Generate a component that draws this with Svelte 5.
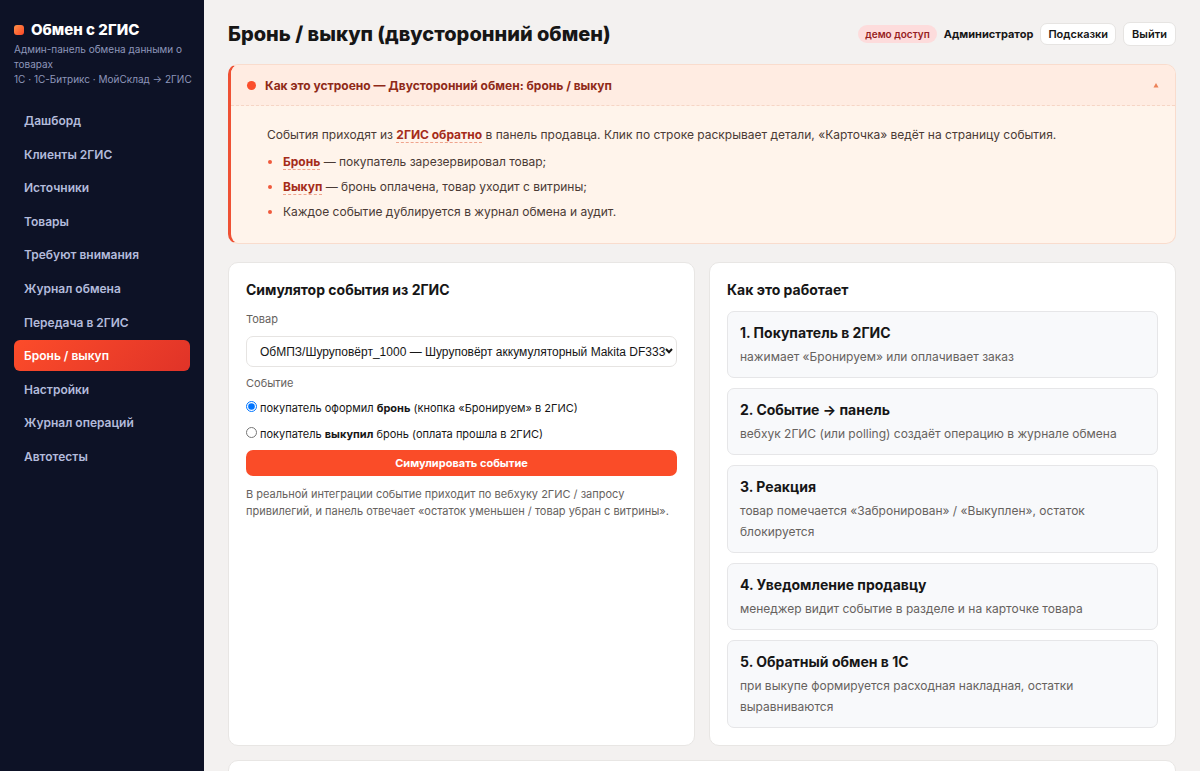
<script lang="ts">
  const nav = [
    'Дашборд',
    'Клиенты 2ГИС',
    'Источники',
    'Товары',
    'Требуют внимания',
    'Журнал обмена',
    'Передача в 2ГИС',
    'Бронь / выкуп',
    'Настройки',
    'Журнал операций',
    'Автотесты',
  ];

  const steps = [
    { title: 'Покупатель в 2ГИС', text: 'нажимает «Бронируем» или оплачивает заказ' },
    { title: 'Событие → панель', text: 'вебхук 2ГИС (или polling) создаёт операцию в журнале обмена' },
    { title: 'Реакция', text: 'товар помечается «Забронирован» / «Выкуплен», остаток блокируется' },
    { title: 'Уведомление продавцу', text: 'менеджер видит событие в разделе и на карточке товара' },
    { title: 'Обратный обмен в 1С', text: 'при выкупе формируется расходная накладная, остатки выравниваются' },
  ];

  let active = $state('Бронь / выкуп');
  let kind = $state('reserve');
  let hintOpen = $state(true);
</script>

<div class="layout">
  <aside class="sidebar">
    <div class="brand"><span class="logo"></span>Обмен с 2ГИС</div>
    <div class="tagline">
      Админ-панель обмена данными о товарах
      <div class="sources">1С · 1С-Битрикс · МойСклад → 2ГИС</div>
    </div>
    <nav>
      {#each nav as item}
        <a href="#top" class:active={item === active} onclick={() => (active = item)}>{item}</a>
      {/each}
    </nav>
  </aside>

  <main>
    <header class="topbar">
      <h1>Бронь / выкуп (двусторонний обмен)</h1>
      <div class="user">
        <span class="badge">демо доступ</span>
        <strong>Администратор</strong>
        <button class="btn small" type="button">Подсказки</button>
        <button class="btn" type="button">Выйти</button>
      </div>
    </header>

    <section class="hint">
      <button class="hint-head" type="button" aria-expanded={hintOpen} onclick={() => (hintOpen = !hintOpen)}>
        <span class="dot"></span>
        <span class="hint-title">Как это устроено — Двусторонний обмен: бронь / выкуп</span>
        <svg class="caret" viewBox="0 0 6 6" aria-hidden="true"><path d="M3 1 L5.5 5.5 H0.5 Z" /></svg>
      </button>
      {#if hintOpen}
        <div class="hint-body">
          <p>
            События приходят из <b>2ГИС обратно</b> в панель продавца. Клик по строке раскрывает детали, «Карточка» ведёт на страницу события.
          </p>
          <ul>
            <li><b>Бронь</b> — покупатель зарезервировал товар;</li>
            <li><b>Выкуп</b> — бронь оплачена, товар уходит с витрины;</li>
            <li>Каждое событие дублируется в журнал обмена и аудит.</li>
          </ul>
        </div>
      {/if}
    </section>

    <div class="columns">
      <section class="card">
        <h2>Симулятор события из 2ГИС</h2>
        <form onsubmit={(e) => e.preventDefault()}>
          <label class="label" for="product">Товар</label>
          <div class="select">
            <select id="product">
              <option>ОбМПЗ/Шуруповёрт_1000 — Шуруповёрт аккумуляторный Makita DF333DWYE</option>
            </select>
            <svg viewBox="0 0 8 6" aria-hidden="true"><path d="M1 1 L4 4.2 L7 1" /></svg>
          </div>
          <div class="label" id="kind">Событие</div>
          <div class="radios" role="radiogroup" aria-labelledby="kind">
            <label>
              <input type="radio" name="kind" value="reserve" bind:group={kind} />
              <span>покупатель оформил <b>бронь</b> (кнопка «Бронируем» в 2ГИС)</span>
            </label>
            <label>
              <input type="radio" name="kind" value="buyout" bind:group={kind} />
              <span>покупатель <b>выкупил</b> бронь (оплата прошла в 2ГИС)</span>
            </label>
          </div>
          <button class="primary" type="submit">Симулировать событие</button>
        </form>
        <p class="note">
          В реальной интеграции событие приходит по вебхуку 2ГИС / запросу привилегий, и панель отвечает «остаток уменьшен / товар убран с витрины».
        </p>
      </section>

      <section class="card">
        <h2>Как это работает</h2>
        <div class="steps">
          {#each steps as step, i}
            <div class="step">
              <h3>{i + 1}. {step.title}</h3>
              <p>{step.text}</p>
            </div>
          {/each}
        </div>
      </section>
    </div>

    <section class="card log"></section>
  </main>
</div>

<style>
  :global(body) {
    margin: 0;
    background: #f3f1f0;
  }

  .layout {
    display: flex;
    height: 100vh;
    font-family: Inter, 'Liberation Sans', sans-serif;
    font-size: 12px;
    color: #161616;
  }

  .layout * {
    box-sizing: border-box;
  }

  h1,
  h2,
  h3,
  p,
  ul {
    margin: 0;
    padding: 0;
  }

  button,
  select {
    font-family: inherit;
    color: inherit;
    cursor: pointer;
  }

  .sidebar {
    flex: none;
    width: 204px;
    padding: 20px 14px;
    background: #0d1226;
  }

  .brand {
    display: flex;
    align-items: center;
    gap: 7px;
    line-height: 20px;
    font-size: 15px;
    font-weight: 800;
    color: #fff;
  }

  .logo {
    width: 10px;
    height: 10px;
    border-radius: 3px;
    background: linear-gradient(135deg, #ff9248, #fb4627);
  }

  .tagline {
    margin: 2px 0 18px;
    line-height: 15px;
    font-size: 10px;
    color: #8d96ba;
  }

  .sources {
    white-space: nowrap;
  }

  nav {
    display: grid;
    grid-auto-rows: 1fr;
    gap: 2px;
    height: 367px;
  }

  nav a {
    display: flex;
    align-items: center;
    padding: 0 10px;
    border-radius: 6px;
    font-size: 12px;
    font-weight: 600;
    color: #b3bbdb;
    text-decoration: none;
  }

  nav a.active {
    background: linear-gradient(135deg, #fc4c2a, #e03328);
    color: #fff;
  }

  main {
    flex: 1;
    min-width: 0;
    padding: 20px 24px;
    overflow-y: auto;
    scrollbar-width: none;
  }

  .topbar {
    display: flex;
    align-items: center;
    justify-content: space-between;
    height: 28px;
    margin-bottom: 16px;
  }

  h1 {
    font-size: 20px;
    font-weight: 800;
  }

  .user {
    display: flex;
    align-items: center;
    gap: 7px;
    font-size: 11px;
  }

  .badge {
    padding: 0 7px;
    border-radius: 9px;
    line-height: 18px;
    background: #fddcdc;
    font-size: 10px;
    font-weight: 600;
    color: #971d22;
  }

  .btn {
    padding: 0 8px;
    border: 1px solid #e6e4e2;
    border-radius: 7px;
    line-height: 22px;
    background: #fff;
    font-size: 11px;
    font-weight: 600;
  }

  .btn.small {
    padding: 0 7px;
    line-height: 20px;
  }

  .hint {
    margin-bottom: 18px;
    border: 1px solid #f9dccd;
    border-left: 3px solid #ef5134;
    border-radius: 10px;
    background: #fff4eb;
    overflow: hidden;
  }

  .hint-head {
    display: flex;
    align-items: center;
    gap: 9px;
    width: 100%;
    height: 41px;
    padding: 0 16px;
    border: 0;
    border-bottom: 1px dashed #f6d5c5;
    background: #ffece2;
    text-align: left;
  }

  .dot {
    width: 9px;
    height: 9px;
    border-radius: 50%;
    background: #fb4e2c;
  }

  .hint-title {
    flex: 1;
    font-size: 12px;
    font-weight: 700;
    color: #8f2a18;
  }

  .caret {
    width: 6px;
    height: 6px;
    fill: #ec8258;
  }

  .hint-body {
    padding: 19px 36px 21px;
    line-height: 20px;
    font-size: 12px;
    color: #4a3a35;
  }

  .hint-body b {
    border-bottom: 1px dashed #efa48d;
    font-weight: 700;
    color: #a52c1a;
  }

  .hint-body ul {
    display: grid;
    gap: 5px;
    margin-top: 7px;
    list-style: none;
  }

  .hint-body li::before {
    content: '';
    display: inline-block;
    width: 4px;
    height: 4px;
    margin: 0 11px 2px 1px;
    border-radius: 50%;
    background: #f0593c;
  }

  .columns {
    display: grid;
    grid-template-columns: 1fr 1fr;
    gap: 14px;
    margin-bottom: 14px;
  }

  .card {
    min-width: 0;
    padding: 17px;
    border: 1px solid #e8e6e4;
    border-radius: 10px;
    background: #fff;
  }

  h2 {
    margin-bottom: 11px;
    line-height: 20px;
    font-size: 14px;
    font-weight: 700;
  }

  form {
    display: flex;
    flex-direction: column;
  }

  .label {
    line-height: 17px;
    font-size: 11px;
    color: #66625e;
  }

  .select {
    display: flex;
    position: relative;
    margin: 8px 0;
  }

  select {
    width: 100%;
    height: 31px;
    padding: 0 10px 0 13px;
    border: 1px solid #e6e4e2;
    border-radius: 7px;
    appearance: none;
    background: #fff;
    font-family: 'Liberation Sans', Arial, sans-serif;
    font-size: 12px;
  }

  .select svg {
    position: absolute;
    top: 12px;
    right: 4px;
    width: 8px;
    height: 6px;
    fill: none;
    stroke: #161616;
    stroke-width: 2;
    pointer-events: none;
  }

  .radios {
    display: grid;
    gap: 6px;
    margin: 6px 0;
  }

  .radios label {
    display: flex;
    align-items: center;
    gap: 3px;
    line-height: 20px;
    font-size: 11px;
  }

  .radios input {
    width: 11px;
    height: 11px;
    margin: 0 0 3px;
  }

  .primary {
    height: 26px;
    border: 0;
    border-radius: 7px;
    background: #fa4c28;
    font-size: 11px;
    font-weight: 700;
    color: #fff;
  }

  .note {
    margin-top: 10px;
    line-height: 17px;
    font-size: 11px;
    color: #66625e;
  }

  .steps {
    display: grid;
    gap: 10px;
  }

  .step {
    padding: 10px 12px;
    border: 1px solid #e6e6e8;
    border-radius: 7px;
    background: #f8f9fb;
  }

  h3 {
    margin-bottom: 3px;
    line-height: 21px;
    font-size: 14px;
    font-weight: 700;
  }

  .step p {
    line-height: 21px;
    font-size: 12px;
    color: #66625e;
  }

  .log {
    min-height: 200px;
  }
</style>
